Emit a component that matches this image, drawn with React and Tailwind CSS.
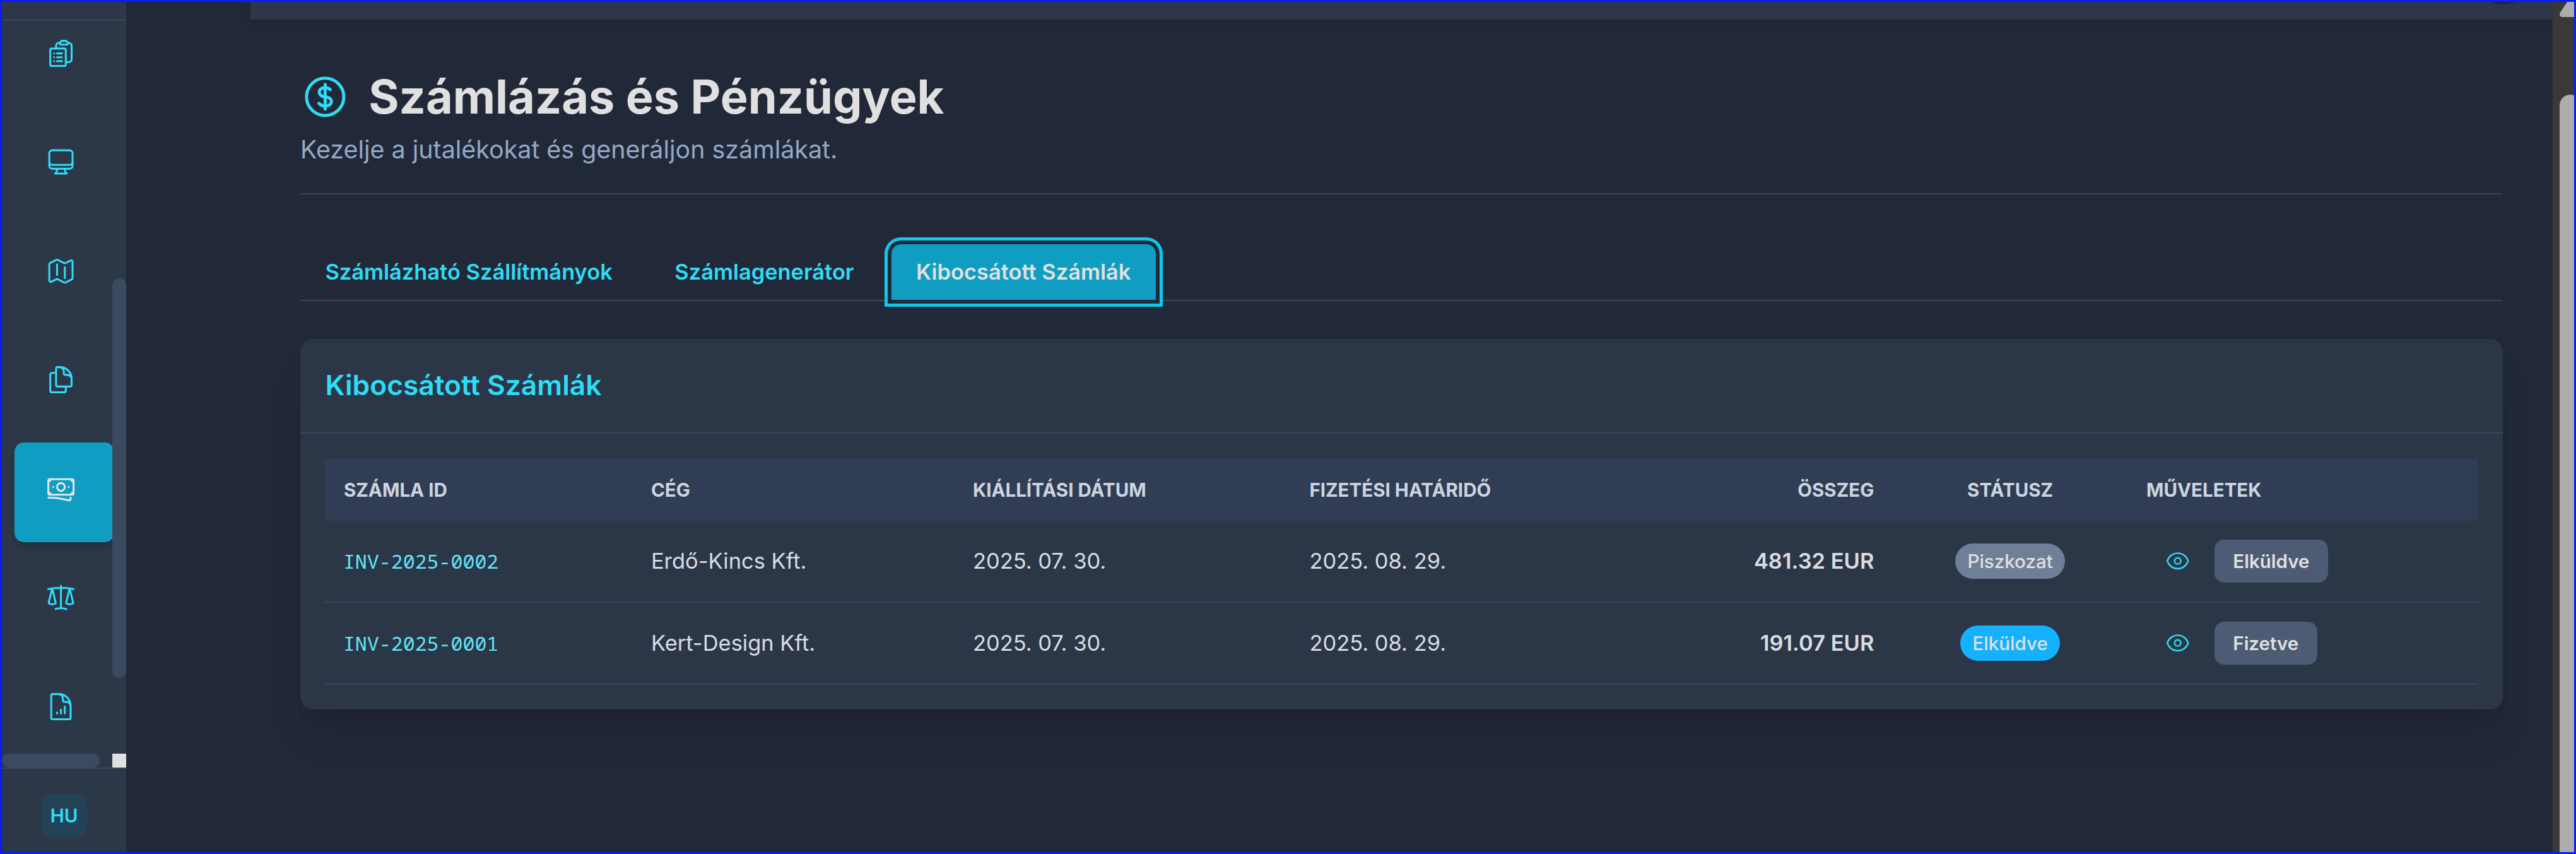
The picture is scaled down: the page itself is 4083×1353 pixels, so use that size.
import {
  HiOutlineClipboardDocumentList,
  HiOutlineComputerDesktop,
  HiOutlineMap,
  HiOutlineDocumentDuplicate,
  HiOutlineBanknotes,
  HiOutlineScale,
  HiOutlineDocumentChartBar,
  HiOutlineCurrencyDollar,
  HiOutlineEye,
} from "react-icons/hi2";

const navItems = [
  { id: "orders", Icon: HiOutlineClipboardDocumentList },
  { id: "monitor", Icon: HiOutlineComputerDesktop },
  { id: "map", Icon: HiOutlineMap },
  { id: "documents", Icon: HiOutlineDocumentDuplicate },
  { id: "billing", Icon: HiOutlineBanknotes, active: true },
  { id: "compliance", Icon: HiOutlineScale },
  { id: "reports", Icon: HiOutlineDocumentChartBar },
];

const tabs = [
  { label: "Számlázható Szállítmányok" },
  { label: "Számlagenerátor" },
  { label: "Kibocsátott Számlák", active: true },
];

const invoices = [
  {
    id: "INV-2025-0002",
    company: "Erdő-Kincs Kft.",
    issued: "2025. 07. 30.",
    due: "2025. 08. 29.",
    total: "481.32 EUR",
    status: "Piszkozat",
    badge: "bg-[#6f7f97]",
    action: "Elküldve",
  },
  {
    id: "INV-2025-0001",
    company: "Kert-Design Kft.",
    issued: "2025. 07. 30.",
    due: "2025. 08. 29.",
    total: "191.07 EUR",
    status: "Elküldve",
    badge: "bg-[#14b1fe]",
    action: "Fizetve",
  },
];

const columns = "grid grid-cols-[487px_510px_533.5px_954px_372.5px_1fr] items-center";

function Sidebar() {
  return (
    <aside className="flex w-[197px] shrink-0 flex-col bg-[#2c3748]">
      <div className="h-[30px] shrink-0 border-b-2 border-[#3c485b]" />
      <div className="relative h-[1183px] shrink-0 overflow-hidden">
        <nav className="-mt-[22px] flex flex-col gap-[15px] pl-5">
          {navItems.map(({ id, Icon, active }) => (
            <a
              key={id}
              className={
                active
                  ? "flex h-[157.6px] w-[158px] shrink-0 rounded-[15px] bg-[#0f9ec1] pt-[48.5px] pl-[49px] text-[#e0e5ea] shadow-[0_10px_15px_-2px_rgba(0,0,0,0.13)]"
                  : "flex h-[157.6px] w-[158px] shrink-0 rounded-[15px] pt-[48.5px] pl-[49px] text-[#2edcf6]"
              }
            >
              <Icon className="size-[49.2px]" />
            </a>
          ))}
        </nav>
        <div className="absolute top-[408px] right-0 h-[633px] w-[22px] rounded-full bg-[#3a4a5f]" />
        <div className="absolute bottom-0 left-0 h-[22px] w-[155px] rounded-full bg-[#3a4a5f]" />
        <div className="absolute right-0 bottom-0 size-[22px] bg-[#e0e0e0]" />
      </div>
      <div className="flex grow justify-center border-t-2 border-[#3c485b] pt-10">
        <button className="flex h-[68px] w-[73px] items-center justify-center rounded-[15px] bg-[#244256] text-[29.5px] font-semibold text-[#2edcf6]">
          HU
        </button>
      </div>
    </aside>
  );
}

function TopBar() {
  return (
    <div className="relative ml-[197px] h-7 shrink-0 bg-[#2c3748] shadow-[0_5px_10px_rgba(0,0,0,0.1)]">
      <div className="absolute inset-0 overflow-hidden">
        <div className="absolute right-7 bottom-[24.5px] size-[100px] rounded-full bg-[#1f2638]" />
      </div>
    </div>
  );
}

function PageHeader() {
  return (
    <header className="border-b-2 border-[#3b4558] pb-[39px]">
      <div className="flex h-[88.6px] items-center gap-[29.5px]">
        <HiOutlineCurrencyDollar className="size-[78.8px] text-[#2edcf6]" />
        <h1 className="text-[73.8px] leading-[88.6px] font-bold whitespace-nowrap text-[#e0e0e0]">
          Számlázás és Pénzügyek
        </h1>
      </div>
      <p className="mt-[9.8px] text-[39.4px] leading-[59px] text-[#94a8c6]">
        Kezelje a jutalékokat és generáljon számlákat.
      </p>
    </header>
  );
}

function Tabs() {
  return (
    <div className="mt-[79px] flex h-[90px] gap-[19.7px] border-b-2 border-[#3b4558]">
      {tabs.map(({ label, active }) => (
        <button
          key={label}
          className={
            active
              ? "relative h-[88px] rounded-t-[15px] bg-[#0f9ec1] px-[39.4px] text-[34.43px] font-semibold whitespace-nowrap text-[#e0e0e0] shadow-[0_0_0_6px_#1e293b,0_0_0_11px_#10c8e8]"
              : "h-[88px] px-[39.4px] text-[34.43px] font-semibold whitespace-nowrap text-[#2edcf6]"
          }
        >
          {label}
        </button>
      ))}
    </div>
  );
}

function InvoiceTable() {
  return (
    <div className="px-[39.4px] pt-10 pb-[39px]">
      <div className={`${columns} h-[98px] bg-[#313d54] text-[29.54px] font-bold text-[#cbd5e1]`}>
        <div className="pl-[29.5px]">SZÁMLA ID</div>
        <div className="pl-[29.5px]">CÉG</div>
        <div className="pl-[29.5px]">KIÁLLÍTÁSI DÁTUM</div>
        <div className="flex justify-between px-[29.5px]">
          <span>FIZETÉSI HATÁRIDŐ</span>
          <span>ÖSSZEG</span>
        </div>
        <div className="text-center">STÁTUSZ</div>
        <div className="pl-[29.5px]">MŰVELETEK</div>
      </div>
      {invoices.map((row) => (
        <div
          key={row.id}
          className={`${columns} h-[130px] border-b-2 border-[#3b485b] text-[34.46px] text-[#d9dce2]`}
        >
          <div className="pl-[28.5px] font-['Noto_Sans_Mono','DejaVu_Sans_Mono',monospace] text-[31.6px] text-[#62e4f6]">
            {row.id}
          </div>
          <div className="pl-[29.5px]">{row.company}</div>
          <div className="pl-[29.5px]">{row.issued}</div>
          <div className="flex justify-between px-[29.5px]">
            <span>{row.due}</span>
            <span className="font-semibold">{row.total}</span>
          </div>
          <div className="flex justify-center">
            <span
              className={`${row.badge} flex h-14 items-center rounded-full px-[19.7px] text-[29.54px] font-medium text-[#e0e0e0]`}
            >
              {row.status}
            </span>
          </div>
          <div className="flex items-center gap-[38.5px] pl-[59.5px]">
            <HiOutlineEye className="size-[39.4px] text-[#2edcf6]" />
            <button className="h-[68px] rounded-[15px] bg-[#4d5c74] px-[29.5px] text-[29.54px] font-semibold text-[#e0e0e0]">
              {row.action}
            </button>
          </div>
        </div>
      ))}
    </div>
  );
}

function WindowScrollbar() {
  return (
    <div className="flex w-[34px] shrink-0 flex-col items-end overflow-hidden bg-[#393939]">
      <svg className="h-6 w-[23px] shrink-0" viewBox="0 0 23 24" fill="#adadad">
        <path d="M12 0H23V24H4Q-1.500 23 0.800 17Z" />
      </svg>
      <div className="mt-[123px] w-[23px] grow overflow-hidden">
        <div className="h-[1220px] w-[34px] rounded-t-full bg-[#adadad]" />
      </div>
    </div>
  );
}

export default function App() {
  return (
    <div className="flex h-[1353px] w-[4083px] overflow-hidden border-[3px] border-[#0a1cfb] bg-[#212838] font-[Inter,sans-serif]">
      <Sidebar />
      <div className="flex min-w-0 grow flex-col">
        <TopBar />
        <main className="mr-[79px] ml-[276px] pt-[78.6px]">
          <PageHeader />
          <Tabs />
          <section className="mt-[60px] rounded-[20px] bg-[#2b3647] shadow-[0_49px_62px_-12px_rgba(0,0,0,0.1),0_20px_25px_-15px_rgba(0,0,0,0.1)]">
            <h2 className="border-b-2 border-[#3b485b] p-[39.4px] text-[44.3px] leading-[69px] font-semibold text-[#2edcf6]">
              Kibocsátott Számlák
            </h2>
            <InvoiceTable />
          </section>
        </main>
      </div>
      <WindowScrollbar />
    </div>
  );
}
